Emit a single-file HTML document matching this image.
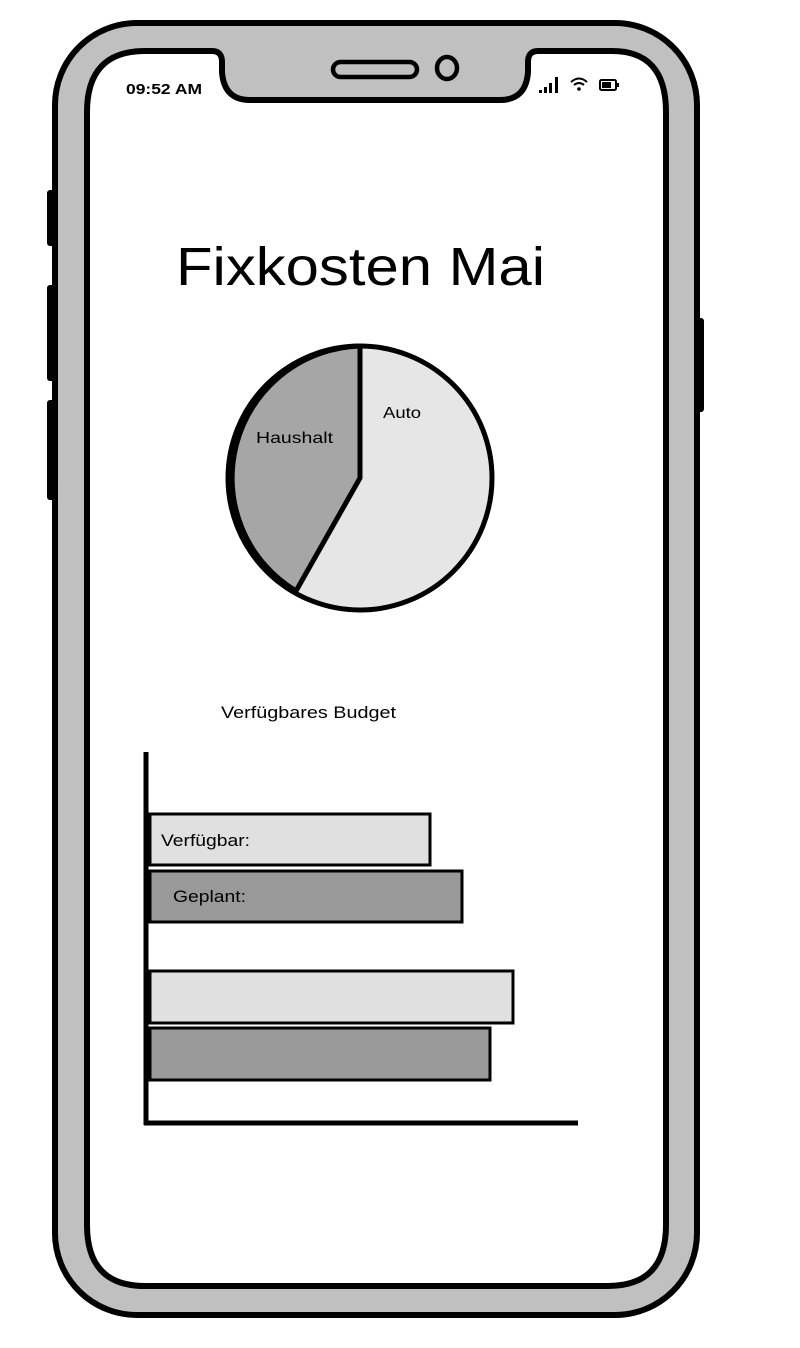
<!DOCTYPE html>
<html><head><meta charset="utf-8"><style>
html,body{margin:0;padding:0;background:#fff;}
svg{display:block;}
text{font-family:"Liberation Sans","DejaVu Sans",sans-serif;fill:#000;}
</style></head><body>
<svg width="800" height="1348" viewBox="0 0 800 1348" xmlns="http://www.w3.org/2000/svg">
<rect x="47" y="190" width="10" height="56" rx="3" fill="#000"/>
<rect x="47" y="285" width="10" height="96" rx="3" fill="#000"/>
<rect x="47" y="400" width="10" height="100" rx="3" fill="#000"/>
<rect x="694" y="318" width="10" height="94" rx="3" fill="#000"/>
<rect x="55" y="23" width="642" height="1292" rx="82" fill="#c0c0c0" stroke="#000" stroke-width="6"/>
<path d="M145,51 L212,51 Q222,51 222,62 L222,72 Q224,100 250,100 L500,100 Q526,100 528,72 L528,62 Q528,51 538,51 L612,51 Q666,51 666,112 L666,1225 Q666,1286 608,1286 L145,1286 Q87,1286 87,1225 L87,112 Q87,51 145,51 Z" fill="#fff" stroke="#000" stroke-width="6"/>
<rect x="333" y="62" width="84" height="15" rx="7.5" fill="none" stroke="#000" stroke-width="4.5"/>
<ellipse cx="447" cy="68" rx="10" ry="11" fill="none" stroke="#000" stroke-width="4.5"/>
<text x="126" y="94" font-size="16" textLength="76" lengthAdjust="spacingAndGlyphs" style="font-weight:bold;font-size:15px">09:52 AM</text>
<rect x="539" y="90" width="3" height="3" fill="#000"/>
<rect x="544" y="87" width="3" height="6" fill="#000"/>
<rect x="549" y="83" width="3" height="10" fill="#000"/>
<rect x="555" y="77" width="3" height="16" fill="#000"/>
<path d="M571,82 Q579,75 587,82 M574,85 Q579,81 584,85" fill="none" stroke="#000" stroke-width="2"/>
<circle cx="579" cy="89" r="1.8" fill="#000"/>
<rect x="600" y="80" width="16" height="10" rx="1.5" fill="none" stroke="#000" stroke-width="2"/>
<rect x="602" y="82" width="9" height="6" fill="#000"/>
<rect x="617" y="83" width="2" height="4" fill="#000"/>
<text x="176" y="285" font-size="54" textLength="369" lengthAdjust="spacingAndGlyphs">Fixkosten Mai</text>
<circle cx="360" cy="478" r="132" fill="#e6e6e6" stroke="#000" stroke-width="5"/>
<path d="M360,346 L360,478 L296,591 A132,132 0 0 1 360,346 Z" fill="#a6a6a6" stroke="#000" stroke-width="5" stroke-linejoin="round"/>
<text x="256" y="443" font-size="16" textLength="77" lengthAdjust="spacingAndGlyphs">Haushalt</text>
<text x="383" y="418" font-size="16" textLength="38" lengthAdjust="spacingAndGlyphs">Auto</text>
<text x="221" y="718" font-size="17" textLength="175" lengthAdjust="spacingAndGlyphs">Verfügbares Budget</text>
<rect x="150" y="814" width="280" height="51" fill="#e0e0e0" stroke="#000" stroke-width="3"/>
<rect x="150" y="871" width="312" height="51" fill="#999" stroke="#000" stroke-width="3"/>
<rect x="150" y="971" width="363" height="52" fill="#e0e0e0" stroke="#000" stroke-width="3"/>
<rect x="150" y="1028" width="340" height="52" fill="#999" stroke="#000" stroke-width="3"/>
<text x="161" y="846" font-size="17" textLength="89" lengthAdjust="spacingAndGlyphs">Verfügbar:</text>
<text x="173" y="902" font-size="17" textLength="73" lengthAdjust="spacingAndGlyphs">Geplant:</text>
<line x1="146" y1="752" x2="146" y2="1125" stroke="#000" stroke-width="5"/>
<line x1="144" y1="1123" x2="578" y2="1123" stroke="#000" stroke-width="5"/>
</svg>
</body></html>
